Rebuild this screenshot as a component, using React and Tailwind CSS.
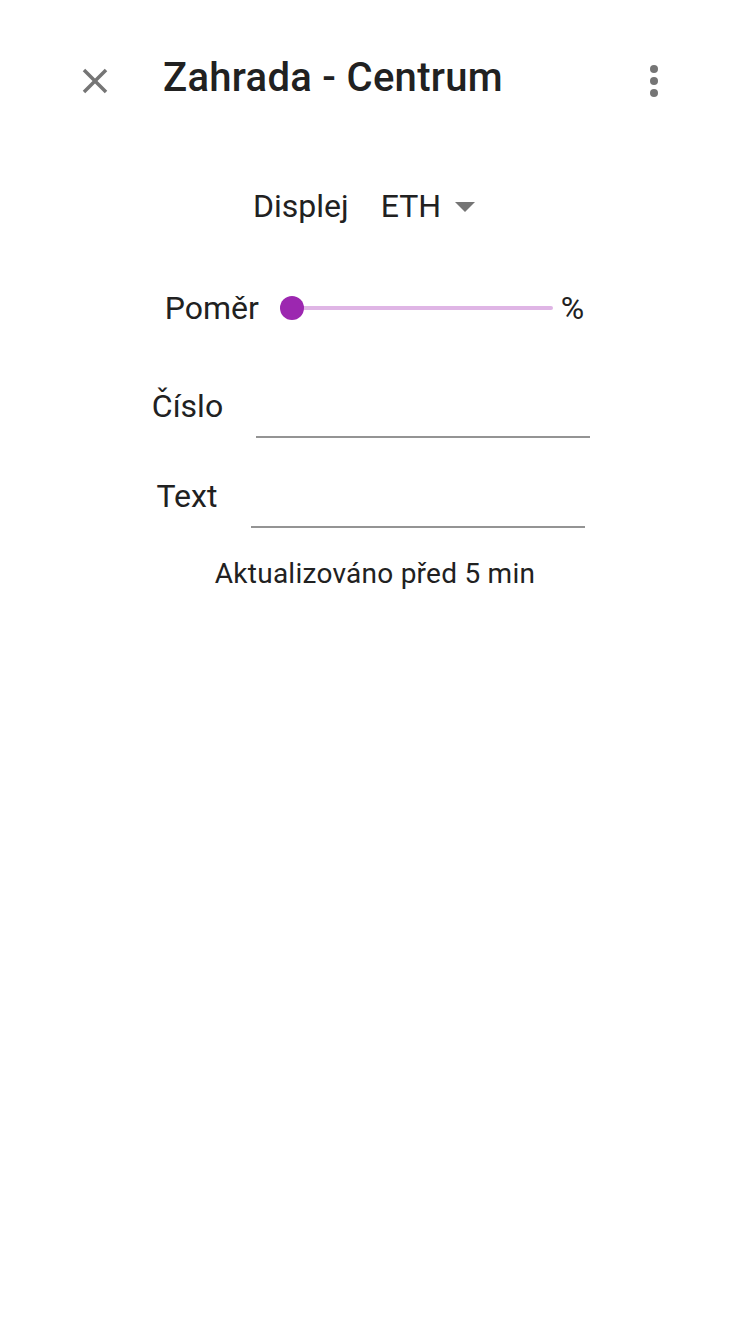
import { useState } from "react";

function CloseIcon() {
  return (
    <svg viewBox="0 0 24 24" className="w-[42px] h-[42px]" fill="#757575">
      <path d="M19 6.41 17.59 5 12 10.59 6.41 5 5 6.41 10.59 12 5 17.59 6.41 19 12 13.41 17.59 19 19 17.59 13.41 12z" />
    </svg>
  );
}

function MoreIcon() {
  return (
    <svg viewBox="0 0 24 24" className="w-[48px] h-[48px]" fill="#757575">
      <circle cx="12" cy="6" r="2" />
      <circle cx="12" cy="12" r="2" />
      <circle cx="12" cy="18" r="2" />
    </svg>
  );
}

function DropIcon() {
  return (
    <svg viewBox="0 0 24 24" className="w-[48px] h-[48px]" fill="#757575">
      <path d="M7 10l5 5 5-5z" />
    </svg>
  );
}

function Slider() {
  return (
    <div className="relative w-[273px] h-[24px]">
      <div className="absolute left-[12px] right-0 top-[10px] h-[4px] rounded-full bg-[#dfb5e5]" />
      <div className="absolute left-0 top-0 w-[24px] h-[24px] rounded-full bg-[#9c27b0]" />
    </div>
  );
}

export default function App() {
  const [num, setNum] = useState("");
  const [txt, setTxt] = useState("");

  return (
    <div className="min-h-[1334px] bg-white text-[#212121] font-['Roboto',sans-serif]">
      {/* header */}
      <div className="flex items-center pl-[74px] pr-[72px] pt-[54px]">
        <CloseIcon />
        <h1 className="ml-[47px] mb-[5px] text-[40px] leading-[48px] font-medium tracking-[0.3px]">Zahrada - Centrum</h1>
        <div className="ml-auto">
          <MoreIcon />
        </div>
      </div>

      <div className="flex flex-col items-center pr-[8px]">
        {/* display select */}
        <div className="mt-[75px] flex items-center h-[48px] text-[32px] leading-[48px]">
          <span>Displej</span>
          <span className="ml-[32px]">ETH</span>
          <DropIcon />
        </div>

        {/* ratio slider */}
        <div className="mt-[54px] flex items-center h-[48px] pl-[7px] text-[32px] leading-[48px]">
          <span>Poměr</span>
          <div className="ml-[21px]">
            <Slider />
          </div>
          <span className="ml-[8px]">%</span>
        </div>

        {/* number */}
        <div className="mt-[50px] flex items-start">
          <span className="text-[32px] leading-[48px]">Číslo</span>
          <input
            value={num}
            onChange={(e) => setNum(e.target.value)}
            className="ml-[33px] w-[334px] h-[56px] border-b-2 border-[#949494] outline-none text-[32px]"
          />
        </div>

        {/* text */}
        <div className="mt-[34px] flex items-start">
          <span className="text-[32px] leading-[48px]">Text</span>
          <input
            value={txt}
            onChange={(e) => setTxt(e.target.value)}
            className="ml-[34px] w-[334px] h-[56px] border-b-2 border-[#949494] outline-none text-[32px]"
          />
        </div>
      </div>

      <p className="mt-[28px] text-center text-[28px] leading-[36px] tracking-[0.25px]">Aktualizováno před 5 min</p>
    </div>
  );
}
